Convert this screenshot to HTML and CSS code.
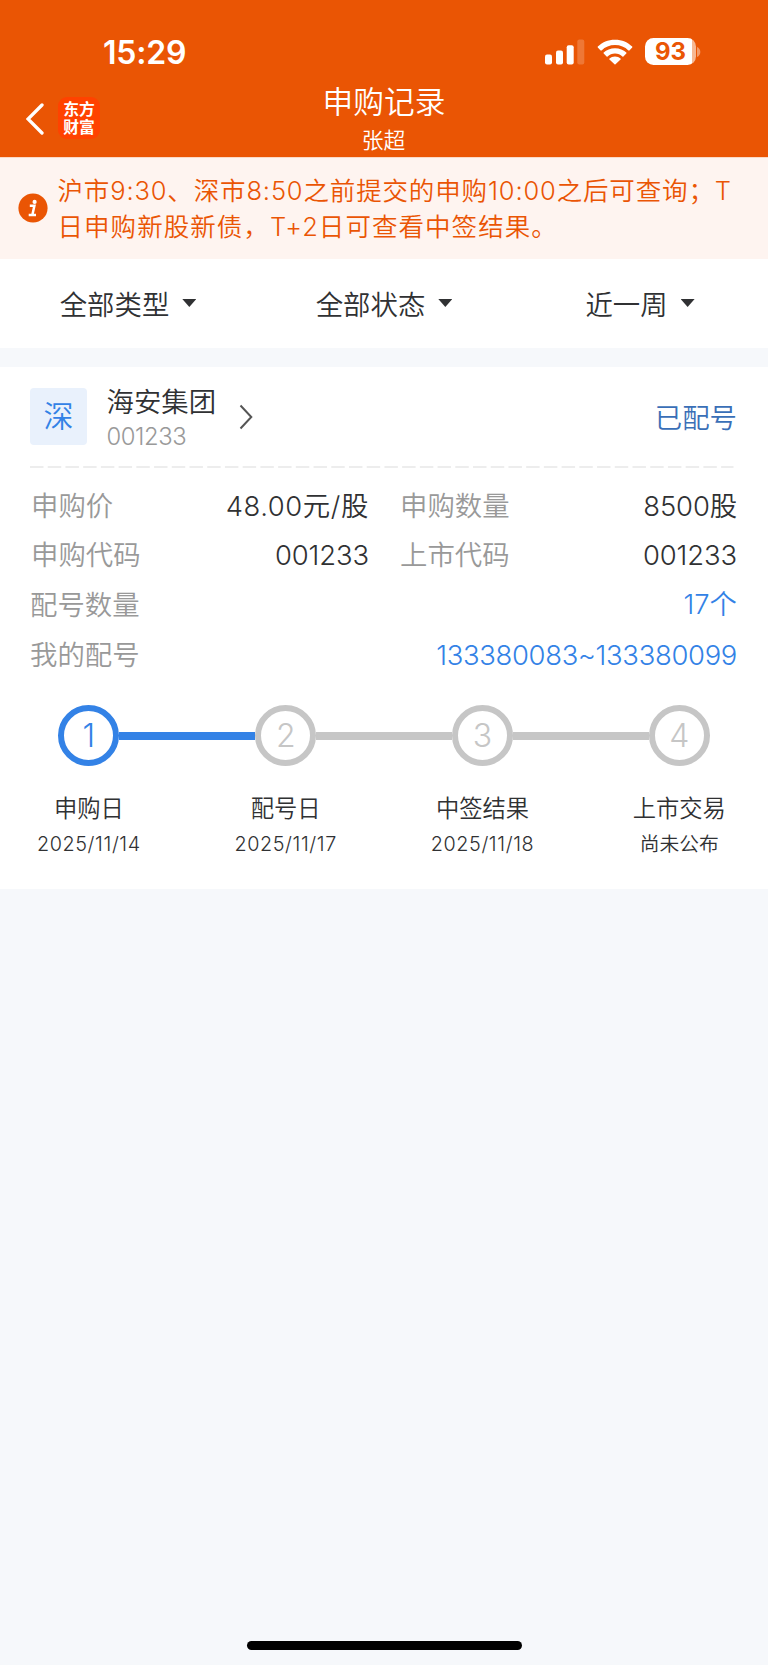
FILE: index.html
```html
<!DOCTYPE html>
<html lang="zh-CN">
<head>
<meta charset="utf-8">
<title>申购记录</title>
<link rel="stylesheet" href="styles.css">
</head>
<body>
<div class="screen">
  <header class="header">
    <div class="status">
      <span class="clock">15:29</span>
      <div class="indicators">
        <svg class="signal" viewBox="0 0 40 26"><rect x="0" y="15.5" width="7" height="10" rx="2"/><rect x="11" y="11.5" width="7" height="14" rx="2"/><rect x="21.7" y="6.3" width="7" height="19.2" rx="2"/><rect x="32.3" y=".5" width="7" height="25" rx="2" opacity=".2"/></svg>
        <svg class="wifi" viewBox="0 0 36 26"><path d="M18 .7C11 .7 5 3.400 .8 7.600Q.4 8.100.8 8.600L3.600 11.400Q4.100 11.800 4.600 11.400C8 8 12.700 6.100 18 6.100s10 1.900 13.400 5.300q.5.400 1 0l2.800-2.800q.4-.5 0-1C31 3.400 25 .7 18 .7z"/><path d="M18 9.200c-4.500 0-8.500 1.700-11.300 4.400q-.5.500 0 1l2.900 2.900q.5.400 1 0C12.500 15.700 15.100 14.600 18 14.600s5.500 1.100 7.400 2.900q.5.400 1 0l2.900-2.900q.5-.5 0-1C26.500 10.900 22.500 9.200 18 9.200z"/><path d="M18 17.500c-2.200 0-4.100.8-5.500 2q-.5.500 0 1l5 4.800q.5.400 1 0l5-4.800q.5-.5 0-1c-1.400-1.200-3.300-2-5.500-2z"/></svg>
        <div class="battery"><span>93</span></div>
        <svg class="nub" viewBox="0 0 4 10"><path d="M0 0c2 .8 3.300 2.600 3.300 5S2 9.200 0 10z"/></svg>
      </div>
    </div>
    <nav class="nav">
      <div class="nav-left">
        <svg class="back" viewBox="0 0 18 34"><path d="M16 3 2 17l14 14"/></svg>
        <div class="logo">东方<br>财富</div>
      </div>
      <div class="titles"><h1>申购记录</h1><p>张超</p></div>
    </nav>
  </header>

  <section class="notice">
    <svg class="info" viewBox="0 0 30 30"><circle cx="15" cy="15" r="14.600"/><path class="info-mark" d="M11.800 12.800h4.600l-2 9M10.700 22h7.300"/><circle class="info-dot" cx="16.600" cy="8.900" r="2.100"/></svg>
    <p><span class="line">沪市9:30、深市8:50之前提交的申购10:00之后可查询；T</span><span class="line line-b">日申购新股新债，T+2日可查看中签结果。</span></p>
  </section>

  <section class="filters">
    <div class="filter">全部类型<i class="caret"></i></div>
    <div class="filter">全部状态<i class="caret"></i></div>
    <div class="filter">近一周<i class="caret"></i></div>
  </section>

  <main class="card">
    <div class="stock">
      <span class="market">深</span>
      <div class="stock-name"><strong>海安集团</strong><span>001233</span></div>
      <svg class="more" viewBox="0 0 14 26"><path d="m1.500 1.500 10.800 11.500L1.500 24.500"/></svg>
      <span class="state">已配号</span>
    </div>
    <svg class="divider" viewBox="0 0 705 2"><path d="M0 1h703.500"/></svg>
    <div class="rows">
      <div class="row pair"><span class="label">申购价</span><span class="value price">48.00元/股</span><span class="label">申购数量</span><span class="value amount">8500股</span></div>
      <div class="row pair"><span class="label">申购代码</span><span class="value code">001233</span><span class="label">上市代码</span><span class="value code">001233</span></div>
      <div class="row wide"><span class="label">配号数量</span><span class="value link count">17个</span></div>
      <div class="row wide"><span class="label">我的配号</span><span class="value link range">133380083~133380099</span></div>
    </div>
    <ol class="steps">
      <li class="step active"><div class="track"><b>1</b></div><h2>申购日</h2><p>2025/11/14</p></li>
      <li class="step"><div class="track"><b>2</b></div><h2>配号日</h2><p>2025/11/17</p></li>
      <li class="step"><div class="track"><b>3</b></div><h2>中签结果</h2><p>2025/11/18</p></li>
      <li class="step"><div class="track"><b>4</b></div><h2>上市交易</h2><p class="pending">尚未公布</p></li>
    </ol>
  </main>
  <div class="home"></div>
</div>
</body>
</html>
```
FILE: styles.css
```css
* { box-sizing: border-box; margin: 0; padding: 0; }
body { background: #f6f8fb; }
svg { display: block; flex: none; }
.screen {
  width: 768px; height: 1665px; overflow: hidden;
  display: flex; flex-direction: column;
  background: #f6f8fb; color: #303133;
  font-family: Inter, "Noto Sans CJK SC", sans-serif;
  font-weight: 350; font-size: 27.4px; white-space: nowrap;
}
.header { height: 158px; background: #ea5504; color: #fff; border-bottom: 1px solid #fbd9c6; }
.status { height: 80px; padding: 24px 67px 0 103px; display: flex; justify-content: space-between; }
.clock { font-size: 32px; font-weight: 600; line-height: 57px; letter-spacing: -.2px; }
.indicators { display: flex; align-items: center; height: 55px; }
.signal { width: 40px; height: 26px; fill: #fff; margin-right: 12px; }
.wifi { width: 36px; height: 26px; fill: #fff; margin-right: 12px; }
.battery {
  width: 51px; height: 27px; border-radius: 8.5px;
  background: linear-gradient(90deg, #fff 47px, #f6b894 47px);
  color: #ea5504; font-size: 24px; font-weight: 650; line-height: 28px; text-align: center;
}
.nub { width: 4px; height: 10px; margin-left: 1px; fill: #f29a6b; }
.nav { display: grid; grid-template-columns: 160px 1fr 160px; }
.nav-left { display: flex; padding: 17px 0 0 26px; }
.back { width: 18px; height: 34px; margin: 5px 14px 0 0; fill: none; stroke: #fff; stroke-width: 3.300; stroke-linecap: round; }
.logo {
  width: 42px; height: 42px; border-radius: 9px; background: #ff4200;
  padding-top: 3px; text-align: center;
  font-family: "Noto Sans CJK SC", sans-serif; font-size: 15.800px; font-weight: 700; line-height: 17.500px;
}
.titles { text-align: center; }
.titles h1 { font-size: 30.700px; font-weight: 350; line-height: 44px; }
.titles p { font-size: 21.800px; line-height: 32px; padding-right: 1px; }
.notice {
  height: 101px; background: #fef4f0; color: #ea5504;
  display: flex; padding: 15px 0 0 17.500px; font-size: 25.500px; line-height: 36px;
}
.info { width: 30px; height: 30px; margin: 20px 10px 0 0; fill: #ea5504; }
.info-mark { fill: none; stroke: #fff; stroke-width: 2.500; }
.info-dot { fill: #fff; }
.line { display: block; letter-spacing: .85px; }
.line-b { letter-spacing: 1.050px; }
.filters { height: 89px; background: #fff; display: grid; grid-template-columns: 256px 256px 256px; }
.filter { display: flex; align-items: center; justify-content: center; padding-bottom: 2px; }
.caret { width: 14px; height: 8px; margin: 1px 0 0 13px; background: #303133; clip-path: polygon(0 0, 100% 0, 50% 100%); }
.card { height: 522px; margin-top: 19px; background: #fff; padding: 21px 32px 0 30px; }
.stock { display: flex; height: 57px; align-items: center; }
.market { width: 57px; height: 57px; border-radius: 4px; background: #e9f1fc; color: #3382e6; font-size: 30px; line-height: 57px; text-align: center; }
.stock-name { width: 110px; margin: 5px 22px 0 19.500px; }
.stock-name strong { display: block; font-weight: 350; line-height: 34px; }
.stock-name span { display: block; color: #999; font-size: 23.800px; line-height: 35px; letter-spacing: -.4px; }
.more { width: 14px; height: 26px; fill: none; stroke: #555; stroke-width: 2; }
.state { margin: -2px -1px 0 auto; color: #3a6fb7; }
.divider { width: 705px; height: 2px; margin-top: 20.500px; stroke: #dcdcdc; stroke-width: 1.200; stroke-dasharray: 13.500 4.220; }
.rows { padding-top: 14px; }
.row { display: grid; height: 49.800px; line-height: 49.800px; }
.pair { grid-template-columns: 112px 227px 112px 1fr; }
.pair .label { padding-left: 1px; }
.pair .label:nth-child(3) { padding-left: 31px; }
.wide { grid-template-columns: 112px 1fr; }
.label { color: #999; }
.value { text-align: right; margin-right: -1px; }
.pair .value:nth-child(2) { margin-right: 0; }
.price { letter-spacing: .6px; }
.amount, .code { letter-spacing: -.1px; }
.range { letter-spacing: -.3px; }
.count { position: relative; top: -1px; }
.link { color: #3382e6; }
.steps { list-style: none; display: grid; grid-template-columns: repeat(4, 196.800px); margin: 24px 0 0 -39.500px; text-align: center; }
.track { height: 62px; display: flex; align-items: center; }
.track::before, .track::after { content: ""; height: 8px; flex: 1; background: #c6c6c6; }
.track b { width: 61px; height: 61px; border: 6px solid #c6c6c6; border-radius: 50%; color: #c6c6c6; font-size: 32px; font-weight: 300; line-height: 49px; }
.step:first-child .track::before, .step:last-child .track::after { background: transparent; }
.active .track::after, .active + .step .track::before { background: #3382e6; }
.active .track b { color: #3382e6; border-color: #3382e6; }
.step h2 { font-size: 23.300px; font-weight: 350; line-height: 36px; margin-top: 24px; }
.step p { font-size: 19.800px; line-height: 34px; letter-spacing: .6px; }
.step .pending { letter-spacing: 0; }
.home { width: 275px; height: 9px; border-radius: 5px; background: #000; margin: auto auto 15px; }
```
